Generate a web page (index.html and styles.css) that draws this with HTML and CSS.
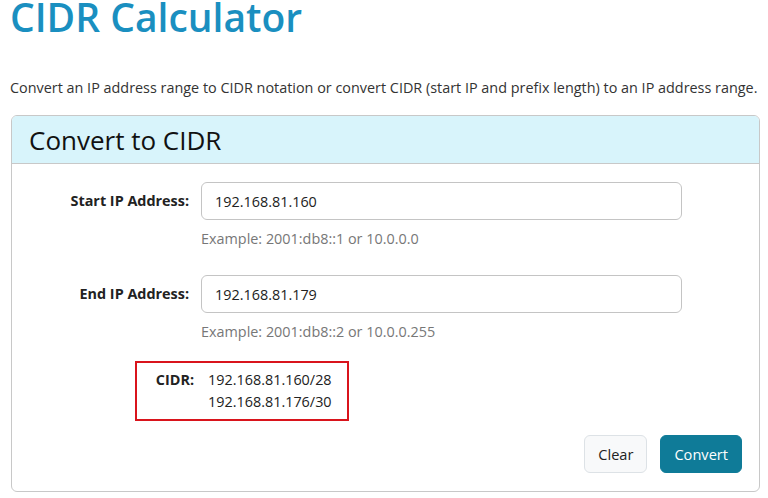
FILE: index.html
```html
<!DOCTYPE html>
<html lang="en">

<head>
    <meta charset="UTF-8">
    <meta name="viewport" content="width=device-width, initial-scale=1.0">
    <title>CIDR Calculator</title>
    <link rel="stylesheet" href="styles.css">
</head>

<body>
    <div class="page">
        <h1 class="title">CIDR Calculator</h1>
        <p class="lead">Convert an IP address range to CIDR notation or convert CIDR (start IP and prefix length) to an IP address range.</p>

        <div class="card">
            <div class="card-header">Convert to CIDR</div>
            <div class="card-body">
                <!-- 起始地址 -->
                <div class="row">
                    <label class="row-label" for="start">Start IP Address:</label>
                    <div class="row-field">
                        <input id="start" class="field" type="text" value="192.168.81.160">
                        <div class="hint">Example: 2001:db8::1 or 10.0.0.0</div>
                    </div>
                </div>
                <!-- 结束地址 -->
                <div class="row">
                    <label class="row-label" for="end">End IP Address:</label>
                    <div class="row-field">
                        <input id="end" class="field" type="text" value="192.168.81.179">
                        <div class="hint">Example: 2001:db8::2 or 10.0.0.255</div>
                    </div>
                </div>
                <!-- 结果 -->
                <div class="result">
                    <span class="result-label">CIDR:</span>
                    <div class="result-list">
                        <div>192.168.81.160/28</div>
                        <div>192.168.81.176/30</div>
                    </div>
                </div>
                <div class="actions">
                    <button class="btn btn-light">Clear</button>
                    <button class="btn btn-primary">Convert</button>
                </div>
            </div>
        </div>
    </div>
</body>

</html>
```

FILE: styles.css
```css
* {
    box-sizing: border-box;
}

body {
    margin: 0;
    font-family: 'Open Sans', 'Noto Sans', sans-serif;
    color: #333;
    background: #fff;
}

.page {
    padding: 0 8px 0 11px;
}

.title {
    margin: 0 0 0 -1px;
    font-size: 39px;
    font-weight: 600;
    line-height: 34px;
    color: #1a8fc0;
}

.lead {
    margin: 43px 0 16px -1px;
    font-size: 14.4px;
    line-height: 22px;
    color: #333;
}

.card {
    border: 1px solid #c8c8c8;
    border-radius: 6px;
    overflow: hidden;
}

.card-header {
    height: 48px;
    padding-left: 17px;
    background: #d8f4fb;
    border-bottom: 1px solid #c8c8c8;
    font-size: 26px;
    line-height: 48px;
    color: #111;
}

.card-body {
    padding: 18px 17px 18px 0;
}

.row {
    display: flex;
    align-items: flex-start;
    margin-bottom: 18px;
}

.row + .row {
    margin-top: 25px;
}

.row-label {
    width: 177px;
    padding-top: 8px;
    text-align: right;
    font-size: 14.4px;
    font-weight: 700;
    line-height: 22px;
    color: #222;
}

.row-field {
    margin-left: 12px;
}

.field {
    display: block;
    width: 481px;
    height: 38px;
    padding: 0 13px;
    border: 1px solid #c4c4c4;
    border-radius: 6px;
    font-family: inherit;
    font-size: 14.4px;
    color: #222;
}

.hint {
    margin-top: 8px;
    font-size: 14.4px;
    line-height: 22px;
    color: #777;
}

.result {
    display: flex;
    width: 214px;
    margin-left: 123px;
    padding: 6px 0;
    border: 2px solid #d9141c;
    font-size: 14.4px;
    line-height: 22px;
}

.result-label {
    width: 57px;
    text-align: right;
    font-weight: 700;
    color: #222;
}

.result-list {
    margin-left: 14px;
    color: #222;
}

.actions {
    display: flex;
    justify-content: flex-end;
    gap: 13px;
    margin-top: 14px;
}

.btn {
    height: 38px;
    padding: 0 13px;
    border-radius: 6px;
    font-family: inherit;
    font-size: 14.6px;
    cursor: pointer;
}

.btn-light {
    background: #f8f9fa;
    border: 1px solid #dde2e6;
    color: #222;
}

.btn-primary {
    background: #0f7b98;
    border: 1px solid #0f7b98;
    color: #fff;
}
```
